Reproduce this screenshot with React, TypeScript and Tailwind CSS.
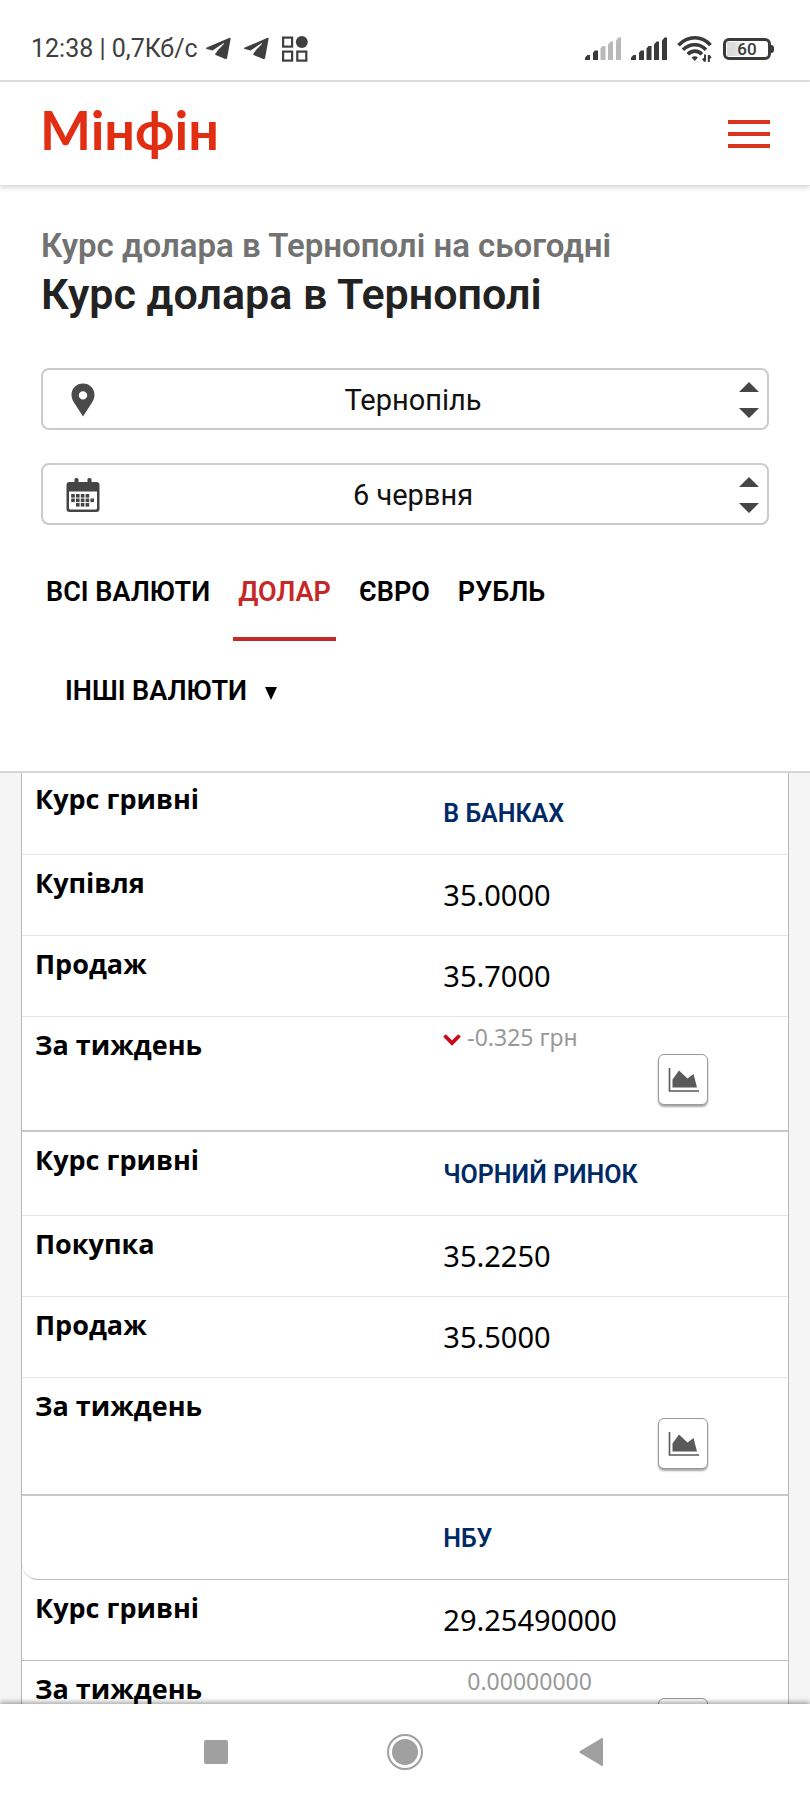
import React from 'react';

interface RateRow {
  label: string;
  kind: 'source' | 'rate' | 'week';
  value: string;
  falling?: boolean;
}

interface RateGroup {
  id: string;
  rows: RateRow[];
}

const groups: RateGroup[] = [
  {
    id: 'banks',
    rows: [
      { label: 'Курс гривні', kind: 'source', value: 'В БАНКАХ' },
      { label: 'Купівля', kind: 'rate', value: '35.0000' },
      { label: 'Продаж', kind: 'rate', value: '35.7000' },
      { label: 'За тиждень', kind: 'week', value: '-0.325 грн', falling: true },
    ],
  },
  {
    id: 'black-market',
    rows: [
      { label: 'Курс гривні', kind: 'source', value: 'ЧОРНИЙ РИНОК' },
      { label: 'Покупка', kind: 'rate', value: '35.2250' },
      { label: 'Продаж', kind: 'rate', value: '35.5000' },
      { label: 'За тиждень', kind: 'week', value: '' },
    ],
  },
  {
    id: 'nbu',
    rows: [
      { label: '', kind: 'source', value: 'НБУ' },
      { label: 'Курс гривні', kind: 'rate', value: '29.25490000' },
      { label: 'За тиждень', kind: 'week', value: '0.00000000' },
    ],
  },
];

const tabs = ['ВСІ ВАЛЮТИ', 'ДОЛАР', 'ЄВРО', 'РУБЛЬ'];

function PlaneIcon() {
  return (
    <svg width="26" height="24" viewBox="0 0 26 24" fill="#3f3f3f" aria-hidden="true">
      <path d="M23.6.8.8 10.600c-.9.4-.9 1.200 0 1.500l5.700 1.500L17.300 6.300c.6-.4 1 .1.600.6l-5.400 5.600-3.200 4.200c-.4.500-.2 1 .4 1.300l9.600 4c1 .4 1.600 0 1.800-1L24.600 1.800c.2-.9-.2-1.300-1-1z" />
    </svg>
  );
}

function AppsIcon() {
  return (
    <svg width="26" height="26" viewBox="0 0 26 26" fill="none" stroke="#3f3f3f" strokeWidth="2.200" aria-hidden="true">
      <rect x="1.100" y="1.600" width="9" height="9" />
      <rect x="1.100" y="15.600" width="9" height="9" />
      <rect x="15.300" y="15.600" width="9" height="9" />
      <circle cx="19.800" cy="6" r="6" fill="#3f3f3f" stroke="none" />
    </svg>
  );
}

function SignalIcon({ level }: { level: number }) {
  const bars = [
    'M0 23v-2.500l2.500-2.500H5v5z',
    'M8 23v-7.500l2-2h3V23z',
    'M15.500 23V11.500l2-2.500h3v14z',
    'M23 23V7.500L25.500 4.500H28V23z',
    'M31 23V3.500L33.500.5H36V23z',
  ];
  return (
    <svg width="36" height="24" viewBox="0 0 36 24" aria-hidden="true">
      {bars.map((d, i) => (
        <path key={d} d={d} fill={i < level ? '#3a3a3a' : '#b9b9b9'} />
      ))}
    </svg>
  );
}

function WifiIcon() {
  return (
    <svg width="36" height="28" viewBox="0 0 36 28" fill="none" stroke="#3a3a3a" strokeWidth="3.600" aria-hidden="true">
      <path d="M1.500 10.200C11 .3 25 .3 33.500 10.200" />
      <path d="M6 14.800c6.500-6.800 17-6.800 23 0" />
      <path d="M10.800 19.300c4-4.200 10.400-4.200 14 0" />
      <path d="M14.500 22.500c2-1.800 4.500-1.800 6.500 0L17.800 26z" fill="#3a3a3a" stroke="none" />
      <path d="M28 19.500v7M28 26.300l-2.200-2.800M31.800 27v-7M31.800 20.300l2 2.800" strokeWidth="2" />
    </svg>
  );
}

function Battery() {
  return (
    <div className="flex items-center">
      <div className="h-[22px] w-12 rounded-md border-[3px] border-[#3a3a3a] p-px">
        <div className="flex h-full items-center justify-center bg-linear-to-r from-[#dcdcdc] from-20% to-white to-45% text-[17px] leading-none font-medium text-[#3a3a3a]">
          60
        </div>
      </div>
      <div className="h-2 w-[3px] rounded-r-sm bg-[#3a3a3a]" />
    </div>
  );
}

function PinIcon() {
  return (
    <svg width="34" height="34" viewBox="0 0 34 34" fill="#4a4a4a" aria-hidden="true">
      <path
        fillRule="evenodd"
        d="M17 .5C10.400.5 5.500 5.400 5.500 11.700c0 3 1 5.300 2.500 7.800L17 33.500l9-14c1.500-2.500 2.500-4.800 2.500-7.800C28.500 5.400 23.600.5 17 .5zm0 7.700a4.200 4.200 0 1 1 0 8.400 4.200 4.200 0 0 1 0-8.400z"
      />
    </svg>
  );
}

function CalendarIcon() {
  const days = [
    [6, 16], [10.800, 16], [15.600, 16], [20.400, 16],
    [6, 20.500], [10.800, 20.500], [15.600, 20.500], [20.400, 20.500], [25.200, 20.500],
    [10.800, 25], [15.600, 25], [20.400, 25],
  ];
  return (
    <svg width="34" height="34" viewBox="0 0 34 34" fill="#454545" aria-hidden="true">
      <rect x="8.500" y="0" width="4" height="7" rx="1.500" />
      <rect x="21.500" y="0" width="4" height="7" rx="1.500" />
      <path fillRule="evenodd" d="M3.500 4h27a3 3 0 0 1 3 3v24a3 3 0 0 1-3 3h-27a3 3 0 0 1-3-3V7a3 3 0 0 1 3-3zM3 13.500V30a1.500 1.500 0 0 0 1.500 1.500h25A1.500 1.500 0 0 0 31 30V13.500z" />
      {days.map(([x, y]) => (
        <rect key={`${x}-${y}`} x={x - 0.800} y={y} width="3.600" height="3.600" />
      ))}
    </svg>
  );
}

function ChartIcon() {
  return (
    <svg width="32" height="26" viewBox="0 0 32 26" aria-hidden="true">
      <path d="M1.500 1v23H31" fill="none" stroke="#5a5a5a" strokeWidth="1.600" />
      <path d="M4.500 20.500v-8L11 3.500l8.500 8L25.500 7l3.500 13.500z" fill="#5a5a5a" />
    </svg>
  );
}

interface PickerProps {
  id: string;
  label: string;
  option: string;
  icon: React.ReactNode;
}

function Picker({ id, label, option, icon }: PickerProps) {
  return (
    <div className="relative">
      <label htmlFor={id} aria-label={label} className="absolute inset-y-0 left-[25px] flex items-center pt-0.5">
        {icon}
      </label>
      <select
        id={id}
        aria-label={label}
        className="h-[62px] w-full appearance-none rounded-lg border-2 border-[#cbcbcb] bg-transparent pt-1 pr-6 pl-10 text-[29px] text-[#111] [text-align-last:center]"
      >
        <option>{option}</option>
      </select>
      <svg
        className="pointer-events-none absolute top-3 right-2"
        width="24"
        height="40"
        viewBox="0 0 24 40"
        fill="#464646"
        aria-hidden="true"
      >
        <path d="M2 12 12 2l10 10zM2 28l10 10 10-10z" />
      </svg>
    </div>
  );
}

function WeekValue({ row }: { row: RateRow }) {
  return (
    <div className="pr-20 pb-[25px]">
      <div className={`flex items-center gap-1 pt-1 text-[23px] text-[#999] ${row.value ? 'h-[37px]' : 'h-10'}`}>
        <span className="w-5">
          {row.falling && (
            <svg className="mt-1" width="18" height="12" viewBox="0 0 18 12" fill="none" stroke="#cc0a14" strokeWidth="3.800" aria-hidden="true">
              <path d="m1.500 1.500 7.500 7.500 7.500-7.500" />
            </svg>
          )}
        </span>
        <span>{row.value}</span>
      </div>
      <button
        type="button"
        aria-label="Графік"
        className="ml-auto flex h-[51px] w-[50px] items-center justify-center rounded-md border border-[#999] bg-white pl-0.5 shadow-[0_2px_2px_rgba(0,0,0,0.35)]"
      >
        <ChartIcon />
      </button>
    </div>
  );
}

function RateLine({ row, line }: { row: RateRow; line: string }) {
  const rounded = row.label === '' ? 'rounded-bl-2xl' : '';
  return (
    <tr>
      <th
        scope="row"
        className={`w-[55%] border-b pt-2.5 pl-[13px] text-left align-top font-['Open_Sans','Noto_Sans',sans-serif] text-[27px] leading-9 font-bold ${line} ${rounded}`}
      >
        {row.label}
      </th>
      <td className={`border-b ${line} ${row.kind === 'week' ? 'align-top' : 'align-middle'}`}>
        {row.kind === 'source' && (
          <a href="#" className="flex h-[83px] items-center pt-0.5 font-['Roboto',sans-serif] text-[25px] font-semibold text-[#002a66]">
            {row.value}
          </a>
        )}
        {row.kind === 'rate' && <div className="flex h-20 items-center text-[29px]">{row.value}</div>}
        {row.kind === 'week' && <WeekValue row={row} />}
      </td>
    </tr>
  );
}

export default function App() {
  return (
    <div className="flex h-screen flex-col overflow-hidden bg-white font-['Roboto',sans-serif] text-black">
      {/* Status bar */}
      <div className="flex h-[82px] shrink-0 items-center justify-between border-b-2 border-[#e0e0e0] pt-[18px] pr-9 pl-[31px]">
        <div className="flex items-center">
          <span className="mr-2 text-[25px] text-[#3f3f3f]">12:38 | 0,7Кб/с</span>
          <div className="flex items-center gap-3">
            <PlaneIcon />
            <PlaneIcon />
            <AppsIcon />
          </div>
        </div>
        <div className="flex items-center gap-2.5">
          <SignalIcon level={2} />
          <SignalIcon level={5} />
          <WifiIcon />
          <Battery />
        </div>
      </div>

      {/* Site header */}
      <header className="z-10 flex h-[104px] shrink-0 items-center justify-between border-b border-[#dedede] px-10 shadow-[0_2px_5px_rgba(0,0,0,0.15)]">
        <a href="#" className="pb-2 font-['Lato',sans-serif] text-[54px] leading-none font-bold text-[#e12e13]">Мінфін</a>
        <button type="button" aria-label="Меню" className="flex w-[42px] flex-col gap-2">
          <span className="h-1 bg-[#d9351c]" />
          <span className="h-1 bg-[#d9351c]" />
          <span className="h-1 bg-[#d9351c]" />
        </button>
      </header>

      {/* Title, filters and tabs */}
      <section className="shrink-0 border-b-2 border-[#d6d6d6] px-[41px] pt-10 pb-[53px]">
        <p className="text-[33px] leading-10 font-semibold text-[#727272]">Курс долара в Тернополі на сьогодні</p>
        <h1 className="text-[43px] leading-[56px] font-semibold text-[#222]">Курс долара в Тернополі</h1>

        <div className="mt-[46px] flex flex-col gap-[33px]">
          <Picker id="city" label="Місто" option="Тернопіль" icon={<PinIcon />} />
          <Picker id="date" label="Дата" option="6 червня" icon={<CalendarIcon />} />
        </div>

        <nav className="mt-[22px] text-[27px] font-semibold">
          <div className="flex gap-[18px]">
            {tabs.map((tab) => (
              <a
                key={tab}
                href="#"
                className={`flex h-[94px] items-center border-b-4 px-[5px] ${
                  tab === 'ДОЛАР' ? 'border-[#c62828] text-[#c62828]' : 'border-transparent'
                }`}
              >
                {tab}
              </a>
            ))}
          </div>
          <button type="button" className="mt-[23px] ml-6 flex h-[54px] items-center gap-[18px]">
            ІНШІ ВАЛЮТИ
            <svg className="mt-1" width="12" height="14" viewBox="0 0 12 14" aria-hidden="true">
              <path d="M0 1h12L6 14z" />
            </svg>
          </button>
        </nav>
      </section>

      {/* Rates */}
      <main className="min-h-0 flex-1 overflow-hidden bg-[#f5f5f5] px-[21px]">
        <table className="-mt-0.5 w-full border-separate border-spacing-0 border-x border-[#b8b8b8] bg-white font-['Noto_Sans','Open_Sans',sans-serif]">
          {groups.map((group) => (
            <tbody key={group.id}>
              {group.rows.map((row, i) => (
                <RateLine
                  key={row.label + i}
                  row={row}
                  line={
                    i === group.rows.length - 1
                      ? 'border-b-2 border-[#c8c8c8]'
                      : group.id === 'nbu'
                        ? 'border-[#bdbdbd]'
                        : 'border-[#e6e6e6]'
                  }
                />
              ))}
            </tbody>
          ))}
        </table>
      </main>

      {/* System navigation */}
      <div className="z-10 flex h-24 shrink-0 items-center justify-center bg-white shadow-[0_-2px_5px_rgba(0,0,0,0.35)]">
        <div className="grid w-[70%] grid-cols-3 justify-items-center">
          <button type="button" aria-label="Останні програми" className="flex size-9 items-center justify-center">
            <span className="size-6 rounded-xs bg-[#a0a0a0]" />
          </button>
          <button type="button" aria-label="Додому">
            <svg width="36" height="36" viewBox="0 0 36 36" aria-hidden="true">
              <circle cx="18" cy="18" r="17" fill="none" stroke="#a0a0a0" strokeWidth="2" />
              <circle cx="18" cy="18" r="13" fill="#a0a0a0" />
            </svg>
          </button>
          <button type="button" aria-label="Назад">
            <svg width="36" height="36" viewBox="0 0 36 36" fill="#a0a0a0" aria-hidden="true">
              <path d="M27 5v26q0 1.500-1.500.8L4 19q-1.500-1 0-2L25.500 4.200Q27 3.500 27 5z" />
            </svg>
          </button>
        </div>
      </div>
    </div>
  );
}
